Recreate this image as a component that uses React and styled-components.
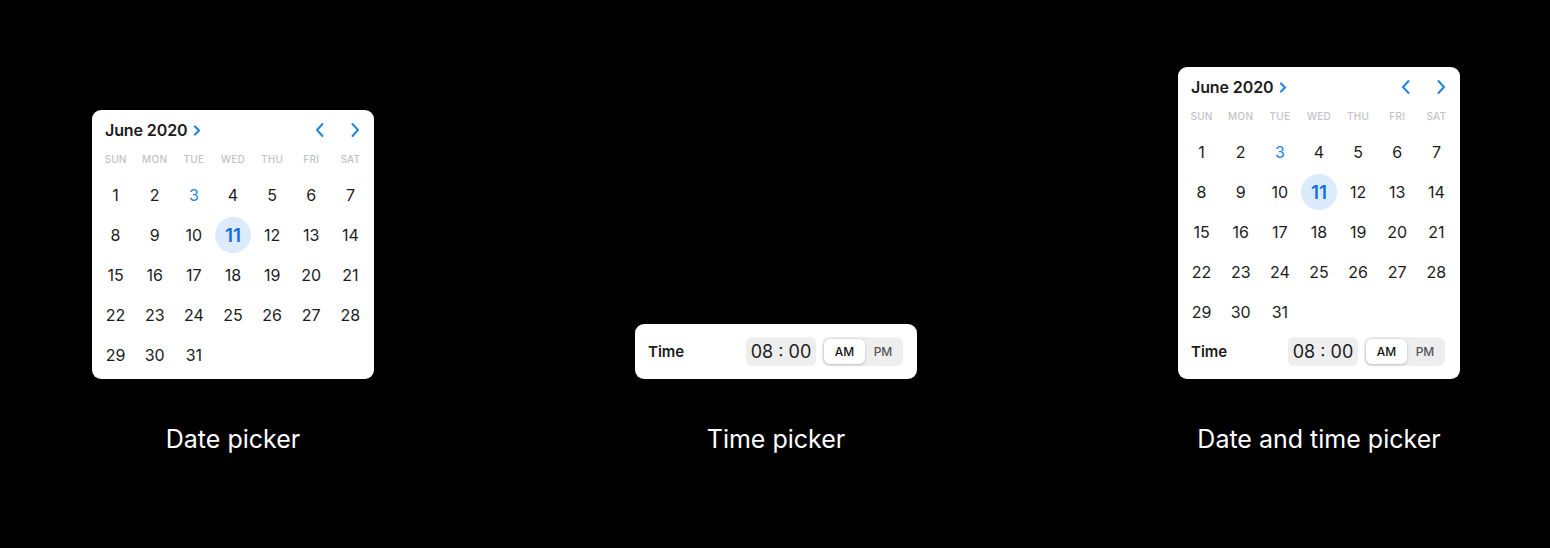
import React from 'react'
import styled, { createGlobalStyle } from 'styled-components'

const blue = '#2485e0'
const ink = '#1c1c1e'
const fieldGrey = '#eeeeef'

const GlobalStyle = createGlobalStyle`
    html, body {
        margin: 0;
        background: #000;
        font-family: Inter, "Noto Sans", "Liberation Sans", sans-serif;
    }
`

const Stage = styled.div`
    display: grid;
    grid-template-columns: repeat(3, 282px);
    grid-template-rows: auto auto;
    align-content: start;
    column-gap: 261px;
    padding: 67px 0 0 92px;
    width: 1550px;
    height: 548px;
    box-sizing: border-box;
`

const Card = styled.div`
    align-self: end;
    width: 282px;
    box-sizing: border-box;
    background: #fff;
    border-radius: 9px;
    padding: ${props => props.$timeOnly ? '8px 4px 9px' : '0 4px 4px'};
`

const Caption = styled.div`
    margin-top: 45px;
    text-align: center;
    color: #fff;
    font-size: 25px;
    line-height: 30px;
    font-weight: 400;
`

const Header = styled.div`
    display: flex;
    align-items: center;
    height: 40px;
    padding-left: 9px;
`

const MonthButton = styled.div`
    display: flex;
    align-items: center;
    gap: 5px;
    font-size: 16px;
    font-weight: 600;
    color: ${ink};
    letter-spacing: -0.1px;
`

const NavGroup = styled.div`
    display: flex;
    margin-left: auto;
    gap: 5px;
`

const NavButton = styled.div`
    width: 30px;
    height: 30px;
    display: flex;
    align-items: center;
    justify-content: center;
`

const Grid = styled.div`
    display: grid;
    grid-template-columns: repeat(7, 1fr);
`

const Weekday = styled.div`
    height: 18px;
    line-height: 18px;
    margin-bottom: 7px;
    text-align: center;
    font-size: 10px;
    font-weight: 500;
    letter-spacing: 0.3px;
    color: #c3c3c6;
`

const Day = styled.div`
    height: 40px;
    display: flex;
    align-items: center;
    justify-content: center;
    font-size: 16px;
    color: ${props => props.$today ? blue : ink};
`

const Selected = styled.span`
    width: 36px;
    height: 36px;
    border-radius: 50%;
    background: #dcebfc;
    color: #1570e0;
    font-size: 19px;
    font-weight: 600;
    display: flex;
    align-items: center;
    justify-content: center;
`

const TimeRow = styled.div`
    display: flex;
    align-items: center;
    height: 38px;
    padding: 0 ${props => props.$right}px 0 9px;
    margin-bottom: ${props => props.$tail}px;
`

const TimeLabel = styled.div`
    font-size: 15px;
    font-weight: 600;
    color: ${ink};
`

const TimeField = styled.div`
    margin-left: auto;
    width: 70px;
    height: 29px;
    border-radius: 6px;
    background: ${fieldGrey};
    display: flex;
    align-items: center;
    justify-content: center;
    font-size: 18px;
    color: ${ink};
    white-space: pre;
`

const Segment = styled.div`
    margin-left: 6px;
    width: 81px;
    height: 29px;
    box-sizing: border-box;
    padding: 2px;
    border-radius: 7px;
    background: ${fieldGrey};
    display: flex;
`

const SegmentOption = styled.div`
    width: ${props => props.$active ? '41px' : 'auto'};
    flex: ${props => props.$active ? 'none' : 1};
    border-radius: 6px;
    display: flex;
    align-items: center;
    justify-content: center;
    font-size: 12px;
    font-weight: 500;
    color: ${props => props.$active ? '#111' : '#555'};
    background: ${props => props.$active ? '#fff' : 'transparent'};
    box-shadow: ${props => props.$active ? '0 1px 3px rgba(0,0,0,0.18), 0 0 0 0.5px rgba(0,0,0,0.05)' : 'none'};
`

const Chevron = ({ dir = 'right', size = 'big' }) => {
    const small = size === 'small'
    const w = small ? 8 : 10
    const h = small ? 11 : 16
    const d = dir === 'right'
        ? (small ? 'M2 1.5 L6 5.5 L2 9.5' : 'M2.5 2 L8 8 L2.5 14')
        : 'M7.5 2 L2 8 L7.5 14'
    return (
        <svg width={w} height={h} viewBox={`0 0 ${w} ${h}`} fill="none">
            <path d={d} stroke={blue} strokeWidth={small ? 2.2 : 2} strokeLinecap="round" strokeLinejoin="round" />
        </svg>
    )
}

const weekdays = ['SUN', 'MON', 'TUE', 'WED', 'THU', 'FRI', 'SAT']
const days = Array.from({ length: 31 }, (_, i) => i + 1)

const Calendar = () => (
    <>
        <Header>
            <MonthButton>
                June 2020
                <Chevron size="small" />
            </MonthButton>
            <NavGroup>
                <NavButton><Chevron dir="left" /></NavButton>
                <NavButton><Chevron /></NavButton>
            </NavGroup>
        </Header>
        <Grid>
            {weekdays.map(w => <Weekday key={w}>{w}</Weekday>)}
            {days.map(d => (
                <Day key={d} $today={d === 3}>
                    {d === 11 ? <Selected>{d}</Selected> : d}
                </Day>
            ))}
        </Grid>
    </>
)

const TimeControl = ({ right, tail }) => (
    <TimeRow $right={right} $tail={tail}>
        <TimeLabel>Time</TimeLabel>
        <TimeField>08 : 00</TimeField>
        <Segment>
            <SegmentOption $active>AM</SegmentOption>
            <SegmentOption>PM</SegmentOption>
        </Segment>
    </TimeRow>
)

const App = () => (
    <>
        <GlobalStyle />
        <Stage>
            <Card>
                <Calendar />
            </Card>
            <Card $timeOnly>
                <TimeControl right={10} tail={0} />
            </Card>
            <Card>
                <Calendar />
                <TimeControl right={11} tail={5} />
            </Card>
            <Caption>Date picker</Caption>
            <Caption>Time picker</Caption>
            <Caption>Date and time picker</Caption>
        </Stage>
    </>
)

export default App
